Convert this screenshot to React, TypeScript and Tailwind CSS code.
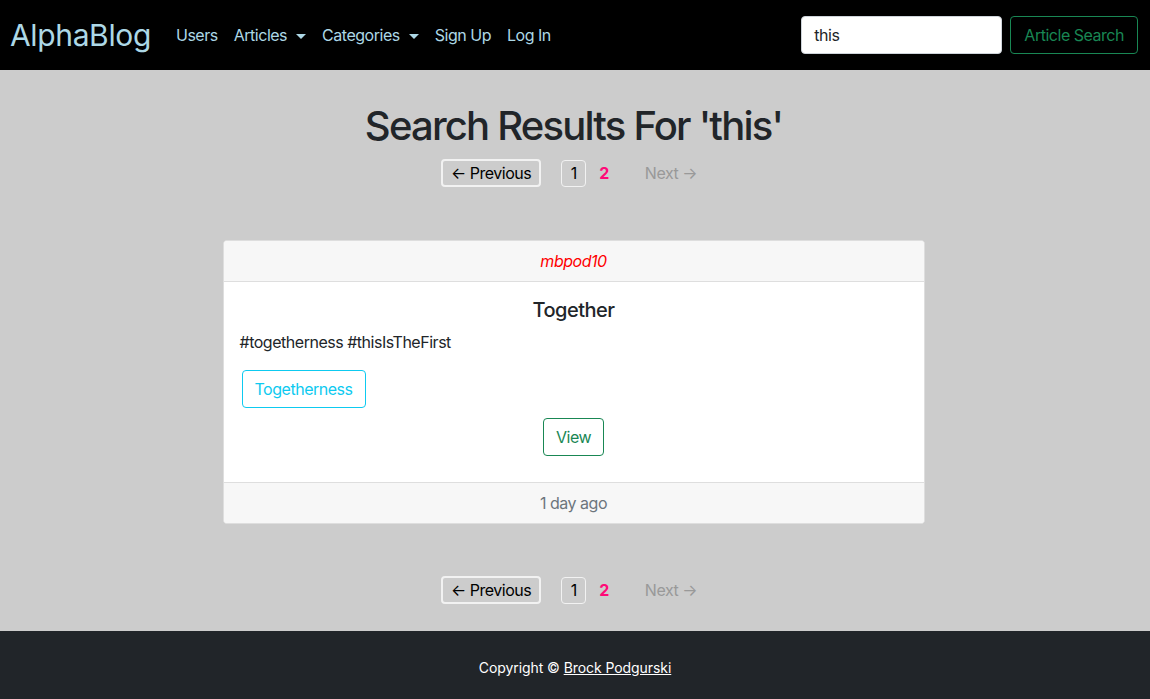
const FONT = { fontFamily: "Inter, 'Noto Sans', sans-serif" };

const NAV_LINKS = [
  { label: "Users", caret: false },
  { label: "Articles", caret: true },
  { label: "Categories", caret: true },
  { label: "Sign Up", caret: false },
  { label: "Log In", caret: false },
];

function Caret() {
  return (
    <span className="ml-[9px] inline-block h-0 w-0 border-x-[5px] border-t-[5px] border-x-transparent border-t-[#add8e6] align-middle" />
  );
}

function Pagination() {
  return (
    <div className="flex items-center justify-center pr-[9px] text-base">
      <span className="flex h-[28px] items-center rounded-[4px] border-2 border-[#f2f2f2] px-[8px] text-black">
        ← Previous
      </span>
      <span className="ml-[20px] flex h-[27px] w-[25px] items-center justify-center rounded-[4px] border border-[#f2f2f2] text-black">
        1
      </span>
      <span className="ml-[13px] font-bold text-[#ff0a78]">2</span>
      <span className="ml-[36px] text-[#999]">Next →</span>
    </div>
  );
}

export default function App() {
  return (
    <div className="flex min-h-[699px] flex-col bg-[#cccccc] tracking-[-0.03em]" style={FONT}>
      <nav className="flex h-[70px] items-center bg-black pl-[10px] pr-[12px]">
        <span className="text-[30px] leading-none tracking-[-0.012em] text-[#add8e6]">AlphaBlog</span>
        <ul className="ml-[17px] flex items-center">
          {NAV_LINKS.map(link => (
            <li key={link.label} className="px-2 text-base text-[#add8e6]">
              {link.label}
              {link.caret && <Caret />}
            </li>
          ))}
        </ul>
        <div className="ml-auto flex items-center gap-2">
          <div className="flex h-[38px] w-[201px] items-center rounded-[4px] border border-[#ced4da] bg-white px-3 text-base text-[#212529]">
            this
          </div>
          <button className="h-[38px] rounded-[4px] border border-[#198754] px-[13px] text-base text-[#198754]">
            Article Search
          </button>
        </div>
      </nav>

      <main className="flex flex-1 flex-col items-center pr-[3px] pt-[32px]">
        <h1 className="text-[40px] font-medium leading-[48px] tracking-[-0.045em] text-[#212529]">
          Search Results For 'this'
        </h1>
        <div className="mt-[9px]">
          <Pagination />
        </div>

        <div className="mt-[53px] w-[702px] overflow-hidden rounded-[4px] border border-[#dedede] bg-white">
          <div className="flex h-[41px] items-center justify-center border-b border-[#dedede] bg-[#f7f7f7] italic text-[#ff0000]">
            mbpod10
          </div>
          <div className="p-4 text-[#212529]">
            <h5 className="text-center text-xl font-medium leading-6">Together</h5>
            <p className="mt-2 text-base leading-6">#togetherness #thisIsTheFirst</p>
            <div className="mt-4">
              <span className="ml-[2px] inline-flex h-[38px] items-center rounded-[4px] border border-[#0dcaf0] px-3 text-[#0dcaf0]">
                Togetherness
              </span>
            </div>
            <div className="mb-[10px] mt-[10px] flex justify-center">
              <span className="inline-flex h-[38px] items-center rounded-[4px] border border-[#198754] px-3 text-[#198754]">
                View
              </span>
            </div>
          </div>
          <div className="flex h-[41px] items-center justify-center border-t border-[#dedede] bg-[#f7f7f7] text-[#6c757d]">
            1 day ago
          </div>
        </div>

        <div className="mb-[27px] mt-[52px]">
          <Pagination />
        </div>
      </main>

      <footer className="flex h-[68px] justify-center bg-[#212529] pt-[27px] text-sm leading-5 tracking-[-0.005em] text-white">
        Copyright ©&nbsp;<span className="underline">Brock Podgurski</span>
      </footer>
    </div>
  );
}
